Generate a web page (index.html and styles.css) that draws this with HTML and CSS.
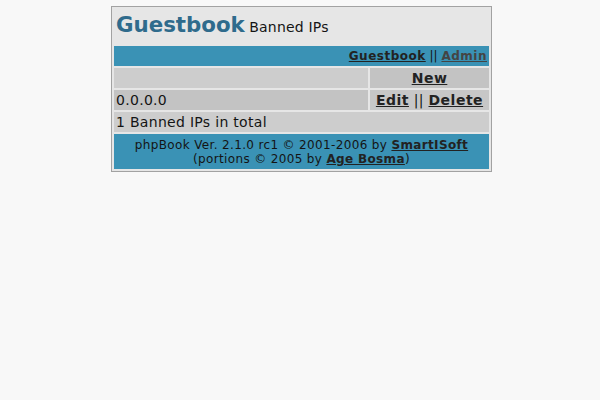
FILE: index.html
```html
<!DOCTYPE html>
<html>
<head>
<meta charset="utf-8">
<title>Guestbook - Banned IPs</title>
<link rel="stylesheet" href="styles.css">
</head>
<body>
<table class="gb">
  <tr>
    <td colspan="2" class="title"><span class="big">Guestbook</span> <span class="sub">Banned IPs</span></td>
  </tr>
  <tr>
    <td colspan="2" class="nav"><a href="#" class="lnk">Guestbook</a> || <a href="#" class="lnk visited">Admin</a></td>
  </tr>
  <tr>
    <td class="cell light"></td>
    <td class="cell dark center"><a href="#" class="lnk">New</a></td>
  </tr>
  <tr>
    <td class="cell dark">0.0.0.0</td>
    <td class="cell mid center"><a href="#" class="lnk">Edit</a> || <a href="#" class="lnk">Delete</a></td>
  </tr>
  <tr>
    <td colspan="2" class="cell light">1 Banned IPs in total</td>
  </tr>
  <tr>
    <td colspan="2" class="footer">phpBook Ver. 2.1.0 rc1 © 2001-2006 by <a href="#" class="lnk">SmartISoft</a><br>(portions © 2005 by <a href="#" class="lnk">Age Bosma</a>)</td>
  </tr>
</table>
</body>
</html>
```
FILE: styles.css
```css
html, body {
  margin: 0;
  padding: 0;
  background: #f8f8f8;
}
body {
  padding: 6px 0 0 3px;
  font-family: "DejaVu Sans", Verdana, sans-serif;
  font-size: 14px;
  color: #141414;
}
.gb {
  width: 381px;
  margin: 0 auto;
  border: 1px solid #a2a2a2;
  border-spacing: 2px;
  background: #e6e6e6;
}
.gb td {
  padding: 2px;
  line-height: 16px;
}
.gb td.title {
  padding: 3px 2px 4px;
  line-height: 26px;
}
.big {
  font-size: 21.33px;
  font-weight: bold;
  color: #2f6b8c;
}
.sub {
  letter-spacing: 0.2px;
}
.gb td.nav {
  background: #3a92b5;
  text-align: right;
  font-size: 12px;
}
.nav .lnk {
  letter-spacing: 0.5px;
}
.lnk {
  font-weight: bold;
  color: #222222;
  text-decoration: underline;
}
.visited {
  color: #444444;
}
.cell {
  letter-spacing: 0.3px;
}
.cell .lnk {
  letter-spacing: 0.5px;
}
.cell.light { background: #cdcdcd; }
.cell.dark { background: #c3c3c3; }
.cell.mid { background: #c7c7c7; }
.center { text-align: center; }
.cell:first-child { width: 250px; }
.gb td.footer {
  background: #3a92b5;
  text-align: center;
  font-size: 12px;
  line-height: 14px;
  padding: 4px 2px 3px;
  letter-spacing: 0.35px;
}
```
